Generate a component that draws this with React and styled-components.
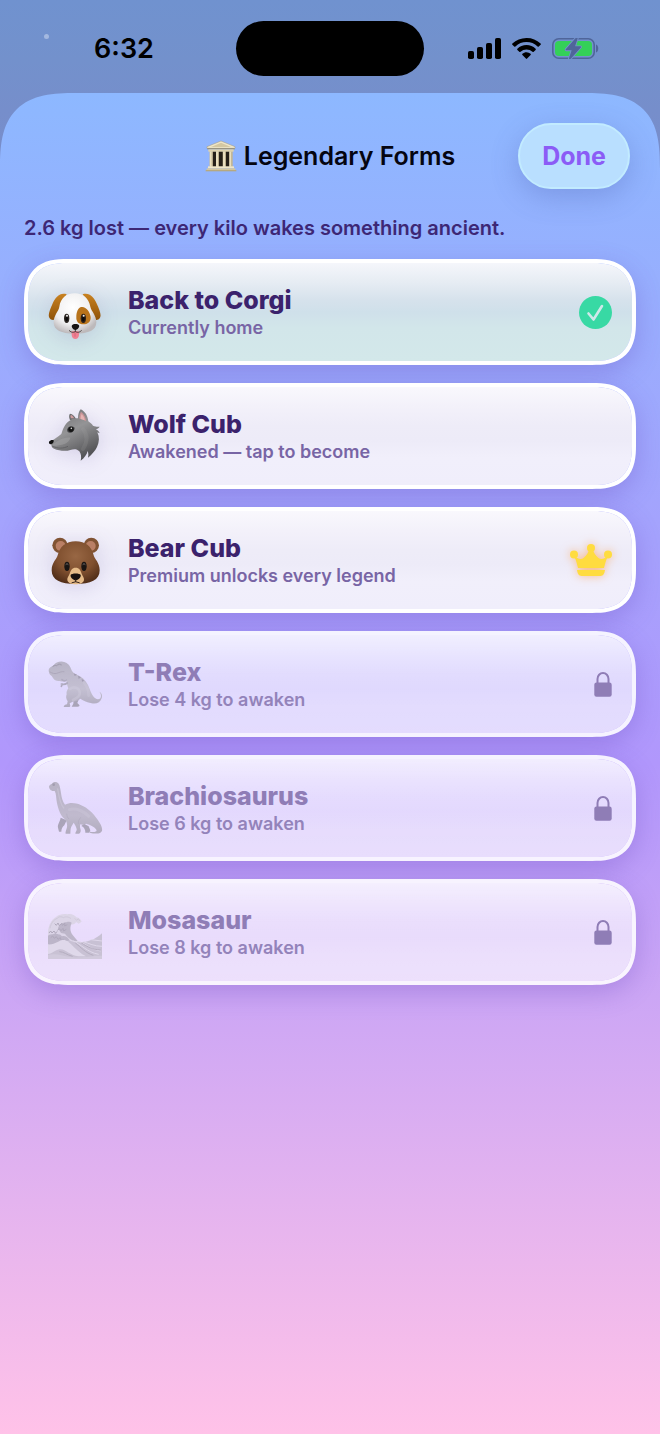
import React from 'react'
import styled, { createGlobalStyle } from 'styled-components'

const GlobalStyle = createGlobalStyle`
  * {
    box-sizing: border-box;
  }
  body {
    margin: 0;
    font-family: Inter, "Noto Sans", sans-serif;
    -webkit-font-smoothing: antialiased;
  }
  button {
    font-family: inherit;
  }
`

const StyledScreen = styled.div`
  min-height: 100vh;
  display: flex;
  flex-direction: column;
  background: linear-gradient(180deg, #7092cf 0, #7391cc 60px, #768ecb 110px, #7a8cc9 200px);
`

const StyledStatusBar = styled.header`
  position: relative;
  display: grid;
  grid-template-columns: 1fr auto 1fr;
  align-items: center;
  padding: 21px 0 17px;
`

const StyledDot = styled.span`
  position: absolute;
  top: 34px;
  left: 44px;
  width: 5px;
  height: 5px;
  border-radius: 50%;
  background: #a3b8e0;
`

const StyledTime = styled.time`
  padding-left: 12px;
  text-align: center;
  font-size: 27px;
  font-weight: 600;
  line-height: 32px;
  color: #000;
`

const StyledIsland = styled.div`
  width: 188px;
  height: 55px;
  border-radius: 28px;
  background: #000;
`

const StyledStatusIcons = styled.div`
  display: flex;
  justify-content: center;
  align-items: center;
  gap: 11px;
  padding-right: 18px;
`

const StyledSheet = styled.main`
  flex: 1;
  display: flex;
  flex-direction: column;
  border-radius: 58px 58px 0 0;
  padding: 30px 24px 48px;
  background: linear-gradient(180deg, #8db8ff 0, #b197fc 50%, #ffc2e8 100%);

  @supports (corner-shape: superellipse(1.5)) {
    border-radius: 76px 76px 0 0;
    corner-shape: superellipse(1.5);
  }
`

const StyledTopRow = styled.div`
  display: grid;
  grid-template-columns: 1fr auto 1fr;
  align-items: center;
  padding: 0 6px;
`

const StyledHeading = styled.h1`
  grid-column: 2;
  display: flex;
  align-items: center;
  gap: 7px;
  margin: 0;
  font-size: 25px;
  font-weight: 600;
  line-height: 32px;
  color: #050510;
`

const StyledDoneButton = styled.button`
  justify-self: end;
  padding: 16px 22px;
  border: 2px solid #c2ebff;
  border-radius: 33px;
  background: #b9dfff;
  box-shadow: 0 8px 28px rgba(72, 90, 170, 0.3);
  color: #8b5cf6;
  font-size: 25px;
  font-weight: 700;
  line-height: 30px;
  cursor: pointer;
`

const StyledSummary = styled.p`
  margin: 26px 0 18px;
  font-size: 20px;
  font-weight: 600;
  line-height: 26px;
  color: #3d2775;
`

const StyledList = styled.ul`
  display: flex;
  flex-direction: column;
  gap: 18px;
  margin: 0;
  padding: 0;
  list-style: none;
`

const cardBackgrounds = {
  current: 'linear-gradient(180deg, #f5f6fb 0, #e6ecf3 20%, #d6e2ec 38%, #cfe0ea 50%, #d2e6ea 66%, #d3e8ea 100%)',
  open: 'linear-gradient(180deg, #f9f8fd 0, #f3f1fa 20%, #eeecf8 40%, #edebf8 54%, #f1effb 72%, #f0eefb 100%)',
  locked:
    'linear-gradient(180deg, rgba(255,255,255,0.84) 0, rgba(255,255,255,0.72) 22%, rgba(255,255,255,0.65) 40%, rgba(255,255,255,0.62) 54%, rgba(255,255,255,0.65) 72%, rgba(255,255,255,0.66) 100%)',
}

const StyledCard = styled.button`
  display: flex;
  align-items: center;
  width: 100%;
  padding: 21px 20px;
  border: 4px solid ${({ $state }) => ($state === 'locked' ? 'rgba(255,255,255,0.88)' : '#fff')};
  border-radius: 35px;
  background: ${({ $state }) => cardBackgrounds[$state]} padding-box;
  box-shadow: 0 8px 26px rgba(92, 62, 180, 0.28);
  text-align: left;
  cursor: ${({ $state }) => ($state === 'locked' ? 'default' : 'pointer')};

  @supports (corner-shape: superellipse(1.4)) {
    border-radius: 44px;
    corner-shape: superellipse(1.4);
  }
`

const StyledEmoji = styled.svg`
  flex: none;
  width: 54px;
  height: 54px;
  margin-right: 26px;
  overflow: visible;
  opacity: ${({ $faded }) => ($faded ? 0.65 : 1)};
  filter: ${({ $faded }) => ($faded ? 'none' : 'drop-shadow(0 4px 10px rgba(80, 60, 140, 0.15))')};
`

const StyledCardText = styled.span`
  flex: 1;
  display: flex;
  flex-direction: column;
`

const StyledCardTitle = styled.span`
  font-size: 25px;
  font-weight: 800;
  line-height: 32px;
  color: ${({ $locked }) => ($locked ? '#8f7db6' : '#3b226c')};
`

const StyledCardNote = styled.span`
  font-size: 18px;
  font-weight: 600;
  line-height: 24px;
  color: ${({ $locked }) => ($locked ? '#9383ba' : '#7865a5')};
`

const StyledCrown = styled.svg`
  overflow: visible;
  filter: drop-shadow(0 0 5px rgba(255, 150, 60, 0.6));
`

const SignalIcon = () => (
  <svg width="33" height="21" viewBox="0 0 33 21" aria-hidden="true">
    <rect x="0" y="13" width="6" height="8" rx="1.8" />
    <rect x="9" y="9" width="6" height="12" rx="1.8" />
    <rect x="18" y="5" width="6" height="16" rx="1.8" />
    <rect x="27" y="0" width="6" height="21" rx="1.8" />
  </svg>
)

const WifiIcon = () => (
  <svg width="29" height="21" viewBox="0 0 29 21" aria-hidden="true">
    <path d="M14.5 0C9 0 4 2.1.4 5.6c-.4.4-.4.8 0 1.2l1.8 1.8c.3.3.8.3 1.2 0a16 16 0 0 1 22.2 0c.4.3.9.3 1.2 0l1.8-1.8c.4-.4.4-.8 0-1.2A20.3 20.3 0 0 0 14.5 0Z" />
    <path d="M14.5 7.1c-3.5 0-6.7 1.3-9.1 3.6-.4.3-.4.8 0 1.2l1.9 1.9c.3.3.8.3 1.2 0a8.8 8.8 0 0 1 12 0c.4.3.9.3 1.2 0l1.9-1.9c.4-.4.4-.9 0-1.2a13.2 13.2 0 0 0-9.1-3.6Z" />
    <path d="M14.5 14.2c-1.6 0-3 .6-4.1 1.5-.4.3-.4.8 0 1.2l3.5 3.7c.4.4.8.4 1.2 0l3.5-3.7c.4-.4.4-.9 0-1.2a6.3 6.3 0 0 0-4.1-1.5Z" />
  </svg>
)

const BatteryIcon = () => (
  <svg width="47" height="21" viewBox="0 0 47 21" aria-hidden="true">
    <rect x="0.8" y="0.8" width="41.4" height="19.4" rx="6" fill="none" stroke="#4f659a" strokeWidth="1.6" />
    <path d="M44 6.5c3 .7 3 7.3 0 8Z" fill="#4f659a" />
    <rect x="3" y="3" width="37" height="15" rx="4" fill="#34d058" />
    <path
      d="M24.3-.7 13.8 11.2c-.4.5-.1 1.1.5 1.1h5.3l-2.7 8.2c-.3 1 .7 1.5 1.4.8L28.8 9.4c.5-.5.1-1.1-.5-1.1h-5.2l2.7-8.2c.3-1-.8-1.5-1.5-.8Z"
      fill="#4f659a"
      stroke="#7391cc"
      strokeWidth="1.8"
      paintOrder="stroke"
    />
  </svg>
)

const TempleIcon = () => (
  <svg width="32" height="32" viewBox="0 0 96 96" aria-hidden="true">
    <path d="M14 34h68v46H14z" fill="#a99d7c" />
    <path d="M22 34h11v46H22zM41 34h12v46H41zM62 34h11v46H62z" fill="#252019" />
    <path d="M14 34h9v46h-9zM33 34h8v46h-8zM54 34h8v46h-8zM73 34h9v46h-9z" fill="#e9dfbf" />
    <path d="M20 34h3v46h-3zM39 34h2v46h-2zM60 34h2v46h-2zM79 34h3v46h-3z" fill="#b3a682" />
    <path d="M48 3 6 20v5h84v-5Z" fill="#eee6ca" stroke="#a99b76" strokeWidth="1.5" />
    <path d="M48 8 18 21h60Z" fill="#d3c7a2" />
    <path d="M7 25h82v3H7z" fill="#8f8362" />
    <path d="M10 28h76v7H10z" fill="#ddd2ae" />
    <path d="M9 79h78v6H9z" fill="#efe6c8" />
    <path d="M5 85h86v5H5z" fill="#d2c6a0" />
    <path d="M2 90h92v4H2z" fill="#b6a980" />
  </svg>
)

const Dog = () => (
  <StyledEmoji viewBox="0 0 162 162" aria-hidden="true">
    <defs>
      <radialGradient id="dogHead" cx="0.45" cy="0.35" r="0.65">
        <stop offset="0" stopColor="#ffffff" />
        <stop offset="0.65" stopColor="#f0eff0" />
        <stop offset="1" stopColor="#bdb9bb" />
      </radialGradient>
      <linearGradient id="dogEar" x1="0" y1="0" x2="0" y2="1">
        <stop offset="0" stopColor="#c98221" />
        <stop offset="1" stopColor="#8f5208" />
      </linearGradient>
    </defs>
    <path d="M56 28C36 22 22 36 13 58 6 74-1 90 4 98c5 9 16 8 22 2 10-12 14-48 30-72Z" fill="url(#dogEar)" />
    <path d="M104 28c20-6 34 8 43 30 7 16 14 32 9 40-5 9-16 8-22 2-10-12-14-48-30-72Z" fill="url(#dogEar)" />
    <path d="M80 25c-26 0-42 15-46 40-2 14-17 25-17 47 0 24 22 34 64 34s64-10 64-34c0-22-15-33-18-47-5-25-21-40-47-40Z" fill="url(#dogHead)" />
    <path d="M99 66c15-3 27 14 29 30 1 15-9 22-22 22-14 0-22-8-21-22 0-14 5-27 14-30Z" fill="#b8731b" />
    <ellipse cx="56" cy="100" rx="8" ry="14" fill="#2b2520" />
    <ellipse cx="106" cy="100" rx="8" ry="14" fill="#2b2018" />
    <ellipse cx="56" cy="102" rx="4" ry="7" fill="#0c0a09" />
    <ellipse cx="106" cy="102" rx="4" ry="7" fill="#0c0a09" />
    <circle cx="57" cy="92" r="3" fill="#eee" />
    <circle cx="107" cy="92" r="3" fill="#eee" />
    <path d="M71 141c0-4 22-4 22 0v8c0 17-22 17-22 0Z" fill="#ee7f91" />
    <path d="M81 142v13" stroke="#cc5b71" strokeWidth="2" />
    <path d="M82 132v8M64 137c7 7 14 6 18 2 4 4 11 5 18-2" fill="none" stroke="#4b4140" strokeWidth="3" strokeLinecap="round" />
    <path d="M72 121c3-5 18-5 21 0 3 5-5 14-11 14s-13-9-10-14Z" fill="#171313" />
  </StyledEmoji>
)

const Wolf = () => (
  <StyledEmoji viewBox="0 0 162 162" aria-hidden="true">
    <defs>
      <linearGradient id="wolfFur" x1="0" y1="0" x2="0.5" y2="1">
        <stop offset="0" stopColor="#69696c" />
        <stop offset="0.5" stopColor="#949496" />
        <stop offset="1" stopColor="#555558" />
      </linearGradient>
    </defs>
    <path d="M66 34c-4-11-3-17 0-20 8 1 14 7 18 16Z" fill="#6e6e70" />
    <path d="M69 28c-2-5-2-8 0-10 5 2 8 6 9 10Z" fill="#cf9c9f" />
    <path
      d="M4 100c14-9 24-16 36-25 6-20 14-36 30-43 6-3 13-4 20-4 0-11 2-20 8-27 13 6 21 19 23 36 7 5 11 9 14 13 8 3 13 4 20 3-3 5-7 7-12 7 7 4 10 7 12 13l-7-3c7 14 6 29-1 44-6 12-15 22-27 32 2-8 1-14-1-20-3 11-9 20-21 29 3-11 1-20-4-28-8-9-18-7-27-4-15 5-34 2-49-4-6-2-7-6-8-11Z"
      fill="url(#wolfFur)"
    />
    <path d="M94 29c0-9 2-16 5-21 10 8 15 18 15 29-7-5-13-7-20-8Z" fill="#c99497" />
    <path d="M98 30c0-7 1-11 3-15 6 7 9 13 9 19Z" fill="#e5b4b3" />
    <path d="M15 106c18-14 34-22 52-20-4 18-26 24-52 24Z" fill="#a3a3a5" opacity="0.5" />
    <path d="M13 112c18 7 32 7 47 0" fill="none" stroke="#58585b" strokeWidth="2" />
    <path d="M3 98c4-5 10-6 14-4 1 6-3 11-9 12-4-1-6-4-5-8Z" fill="#111" />
    <path d="M57 62c4-11 14-13 23-6 0 11-12 19-21 13Z" fill="#454548" />
    <circle cx="69" cy="61" r="8" fill="#151515" />
    <circle cx="70" cy="58" r="2.5" fill="#ddd" />
    <path d="M105 60c15 19 15 37 0 60" fill="none" stroke="#a6a6a8" strokeWidth="12" strokeLinecap="round" opacity="0.18" />
  </StyledEmoji>
)

const Bear = () => (
  <StyledEmoji viewBox="0 0 162 162" aria-hidden="true">
    <defs>
      <radialGradient id="bearFur" cx="0.5" cy="0.35" r="0.65">
        <stop offset="0" stopColor="#986744" />
        <stop offset="0.6" stopColor="#80502f" />
        <stop offset="1" stopColor="#54301a" />
      </radialGradient>
    </defs>
    <circle cx="36" cy="37" r="23" fill="#815333" />
    <circle cx="130" cy="37" r="23" fill="#815333" />
    <circle cx="38" cy="39" r="15" fill="#ba7f65" />
    <circle cx="128" cy="39" r="15" fill="#ba7f65" />
    <path d="M83 25c-30 0-48 16-54 42-3 13-18 21-18 45 0 30 27 41 72 41s72-11 72-41c0-24-15-32-18-45-6-26-24-42-54-42Z" fill="url(#bearFur)" />
    <path d="M83 104c-11 0-15 8-18 18-3 8-8 12-7 19 2 10 13 13 25 13s23-3 25-13c1-7-4-11-7-19-3-10-7-18-18-18Z" fill="#e5bb88" />
    <ellipse cx="57" cy="100" rx="8" ry="14" fill="#191513" />
    <ellipse cx="108" cy="100" rx="8" ry="14" fill="#191513" />
    <path d="M53 95q4-6 8 0M104 95q4-6 8 0" fill="none" stroke="#817a76" strokeWidth="2.5" />
    <path d="M68 126c2-6 28-6 30 0 2 7-8 16-15 16s-17-9-15-16Z" fill="#17110f" />
    <path d="M83 140v6M72 149q11-6 22 0" fill="none" stroke="#34231a" strokeWidth="3" strokeLinecap="round" />
  </StyledEmoji>
)

const TRex = () => (
  <StyledEmoji $faded viewBox="0 0 162 162" aria-hidden="true">
    <defs>
      <linearGradient id="rexSkin" x1="0" y1="0" x2="0" y2="1">
        <stop offset="0" stopColor="#a09da8" />
        <stop offset="0.6" stopColor="#b6b3bc" />
        <stop offset="1" stopColor="#96929e" />
      </linearGradient>
    </defs>
    <path d="M84 108c7 8 12 14 8 20l-4 10 6 6c2 5-4 5-8 5H71l5-9 1-12Z" fill="#8b8794" />
    <path
      d="M2 40c0-7 7-11 14-14 6-9 16-13 28-12 12 1 21 9 25 21 3 9 8 13 15 17 17 7 28 17 36 32 7 15 11 32 22 40 8 6 17 2 17-7 0-5-2-9-5-13 8 3 10 13 7 20-4 13-16 18-30 15-14-3-24-8-34-14-6 5-14 8-23 9l-9 5 2 7c0 4-4 4-8 4H47c1-5 5-7 10-8l2-9c-5-7-6-14-3-21-2-7 2-13 5-18-4-9-6-18-6-27-4 3-7 5-9 5-3 2-8 1-12 0-8 1-16-3-19-9l-4-6c-6-3-9-9-9-17Z"
      fill="url(#rexSkin)"
    />
    <path d="M55 69c-4 4-9 3-13-1M58 78c-5 4-11 5-18 3M43 81l-3 7" fill="none" stroke="#96929f" strokeWidth="5" strokeLinecap="round" />
    <path d="M6 45c8 4 13 6 20 4 9-3 15-6 22-5" fill="none" stroke="#8b8793" strokeWidth="2.5" strokeLinecap="round" />
    <path d="M15 28q5-5 11-2M29 24q5-5 11 0" fill="none" stroke="#827e8a" strokeWidth="3.5" strokeLinecap="round" />
    <path d="m77 49 10 4-7 4ZM90 56l9 5-7 5ZM101 65l8 6-7 3Z" fill="#827e8b" />
    <path d="M66 96c13-11 31-2 29 15-2 11-13 14-20 18" fill="none" stroke="#cbc8d0" strokeWidth="8" strokeLinecap="round" opacity="0.4" />
    <path d="M108 78c10 10 14 25 14 38" fill="none" stroke="#cbc8d0" strokeWidth="8" strokeLinecap="round" opacity="0.3" />
  </StyledEmoji>
)

const Brachiosaurus = () => (
  <StyledEmoji $faded viewBox="0 0 162 162" aria-hidden="true">
    <defs>
      <linearGradient id="brachSkin" x1="0" y1="0" x2="0" y2="1">
        <stop offset="0" stopColor="#9f9ba7" />
        <stop offset="0.65" stopColor="#aeaab5" />
        <stop offset="1" stopColor="#96929e" />
      </linearGradient>
    </defs>
    <path d="M38 110c-2 12-10 20-8 30l3 12h7c0-8 3-14 9-19l7-15ZM108 128l14 8 5 12-3 7h-12c1-8-4-17-12-20Z" fill="#8c8895" />
    <path
      d="M3 17c0-5 5-7 9-9 3-6 15-7 20 0 4 6 5 17 7 28 2 14 5 27 12 35 14-7 31-6 47 1 22 9 37 24 50 43 10 14 16 25 14 34-3 11-21 10-37 6l1-3c14 2 22 0 19-6-5-9-17-14-31-18-5 3-12 4-17 2-2 6-1 10 1 16 1 6-2 12-6 12H82c0-6 5-9 4-14-2-8-5-13-9-19l-7 12c-3 6-2 13-3 21H53c-2-6 3-12 4-20 1-9-1-16-6-23-14-10-20-30-24-48-3-15-2-29-7-37-6 1-16-2-17-13Z"
      fill="url(#brachSkin)"
    />
    <path d="M29 24c4 25 8 46 18 57" fill="none" stroke="#c6c3cc" strokeWidth="4" strokeLinecap="round" opacity="0.5" />
    <path d="M64 86c22-6 46 6 58 20" fill="none" stroke="#c6c3cc" strokeWidth="9" strokeLinecap="round" opacity="0.35" />
    <circle cx="17" cy="11" r="4" fill="#7d7985" />
    <path d="M98 109q-9 10-7 20M56 98q0 12 7 16" fill="none" stroke="#8c8895" strokeWidth="2" opacity="0.7" />
  </StyledEmoji>
)

const Wave = () => (
  <StyledEmoji $faded viewBox="0 0 162 162" aria-hidden="true">
    <path
      d="M0 162V78c3-20 11-34 24-42 10-9 23-10 34-8 12-3 22 2 27 9 8 1 13 6 16 13l-9 6-8-5c-3 8-12 8-21 9-6 12-1 25 9 36 13 14 36 22 60 15 10-4 18-9 30-19v70Z"
      fill="#d5d1dc"
    />
    <path d="M30 70c4-12 14-18 25-18 6-2 12-2 16 1-5 13-6 24 3 37l15 18c-18 1-29-10-38-22l-12-2Z" fill="#a6a2af" />
    <path d="M0 92c9-7 14-1 22-8 9 7 13 1 20 10 12-4 18 4 24 13-22-1-34 15-66 16Z" fill="#a5a1ae" />
    <path d="M66 107c28 10 66 6 96-22v77H0v-34c20 0 40-10 66-21Z" fill="#b7b3c0" />
    <path
      d="M6 70c3-16 11-26 22-30 6-7 13-5 18-2 9-5 18-1 23 3"
      fill="none"
      stroke="#c1bdc9"
      strokeWidth="3"
    />
    <path
      d="M20 56l5 5 5-7 4 8 7-7 2 6 8-6-1 8 8-4M28 76l6-5 5 6 6-7 2 8 8-5M3 84l5-6 4 6 6-6 4 6 6-4M8 98l6-5 5 7 6-5 5 8 7-5 3 9 8-4"
      fill="none"
      stroke="#918c9a"
      strokeWidth="3"
    />
    <path d="M0 118c22 2 31-13 48-14 20 5 35 34 66 50H91c-28-4-40-25-57-21-13 2-21 14-34 14Z" fill="#dad6e1" />
    <path d="M76 108c20 8 42 34 76 40M88 108c25 7 36 24 70 30M106 110c17 5 33 14 56 14M128 104l34 4" fill="none" stroke="#dad6e1" strokeWidth="3" />
    <path d="M82 114c16 12 30 30 54 37M100 114c18 11 34 20 58 21M34 140c14 0 22 10 40 14" fill="none" stroke="#98939f" strokeWidth="3" />
    <path d="M0 150c24-6 48 4 70 7 30 2 60-5 92-5v10H0Z" fill="#c4c0cc" />
    <path d="M80 40l6 6 5-5 4 7" fill="none" stroke="#b9b4c1" strokeWidth="2" />
  </StyledEmoji>
)

const CheckIcon = () => (
  <svg width="33" height="33" viewBox="0 0 33 33" aria-hidden="true">
    <circle cx="16.5" cy="16.5" r="16.5" fill="#38d9a4" />
    <path d="m9.500 17.500 5 6 8.500-13.500" fill="none" stroke="#cfe8ea" strokeWidth="2.6" strokeLinecap="round" strokeLinejoin="round" />
  </svg>
)

const CrownIcon = () => (
  <StyledCrown width="42" height="32" viewBox="0 0 42 32" fill="#ffdc3f" aria-hidden="true">
    <circle cx="21" cy="4" r="4" />
    <circle cx="4" cy="10.5" r="4" />
    <circle cx="38" cy="10.5" r="4" />
    <path d="M4 12c3 2.5 7 4 9.500 2 3-2.500 5-5.500 5.500-8.500h4c.5 3 2.500 6 5.500 8.500 2.500 2 6.500.5 9.500-2-2 4-3 8-4 12H8c-1-4-2-8-4-12Z" />
    <path d="M7 26h28c-.3 3-1.800 6-4.500 6h-19C8.800 32 7.300 29 7 26Z" />
  </StyledCrown>
)

const LockIcon = () => (
  <svg width="18" height="25" viewBox="0 0 18 25" aria-hidden="true">
    <path d="M3.500 12V7a5.500 6 0 0 1 11 0v5" fill="none" stroke="#8f7db6" strokeWidth="2" />
    <rect x="0.3" y="10.5" width="17.4" height="14.3" rx="2.2" fill="#8f7db6" />
  </svg>
)

const forms = [
  { name: 'Back to Corgi', note: 'Currently home', state: 'current', Emoji: Dog, Mark: CheckIcon },
  { name: 'Wolf Cub', note: 'Awakened — tap to become', state: 'open', Emoji: Wolf },
  { name: 'Bear Cub', note: 'Premium unlocks every legend', state: 'open', Emoji: Bear, Mark: CrownIcon },
  { name: 'T-Rex', note: 'Lose 4 kg to awaken', state: 'locked', Emoji: TRex, Mark: LockIcon },
  { name: 'Brachiosaurus', note: 'Lose 6 kg to awaken', state: 'locked', Emoji: Brachiosaurus, Mark: LockIcon },
  { name: 'Mosasaur', note: 'Lose 8 kg to awaken', state: 'locked', Emoji: Wave, Mark: LockIcon },
]

const FormCard = ({ name, note, state, Emoji, Mark }) => {
  const locked = state === 'locked'
  return (
    <StyledCard type="button" $state={state} disabled={locked}>
      <Emoji />
      <StyledCardText>
        <StyledCardTitle $locked={locked}>{name}</StyledCardTitle>
        <StyledCardNote $locked={locked}>{note}</StyledCardNote>
      </StyledCardText>
      {Mark && <Mark />}
    </StyledCard>
  )
}

const App = () => {
  return (
    <>
      <GlobalStyle />
      <StyledScreen>
        <StyledStatusBar>
          <StyledDot />
          <StyledTime>6:32</StyledTime>
          <StyledIsland />
          <StyledStatusIcons>
            <SignalIcon />
            <WifiIcon />
            <BatteryIcon />
          </StyledStatusIcons>
        </StyledStatusBar>
        <StyledSheet>
          <StyledTopRow>
            <StyledHeading>
              <TempleIcon />
              Legendary Forms
            </StyledHeading>
            <StyledDoneButton type="button">Done</StyledDoneButton>
          </StyledTopRow>
          <StyledSummary>2.6 kg lost — every kilo wakes something ancient.</StyledSummary>
          <StyledList>
            {forms.map((form) => (
              <li key={form.name}>
                <FormCard {...form} />
              </li>
            ))}
          </StyledList>
        </StyledSheet>
      </StyledScreen>
    </>
  )
}

export default App
